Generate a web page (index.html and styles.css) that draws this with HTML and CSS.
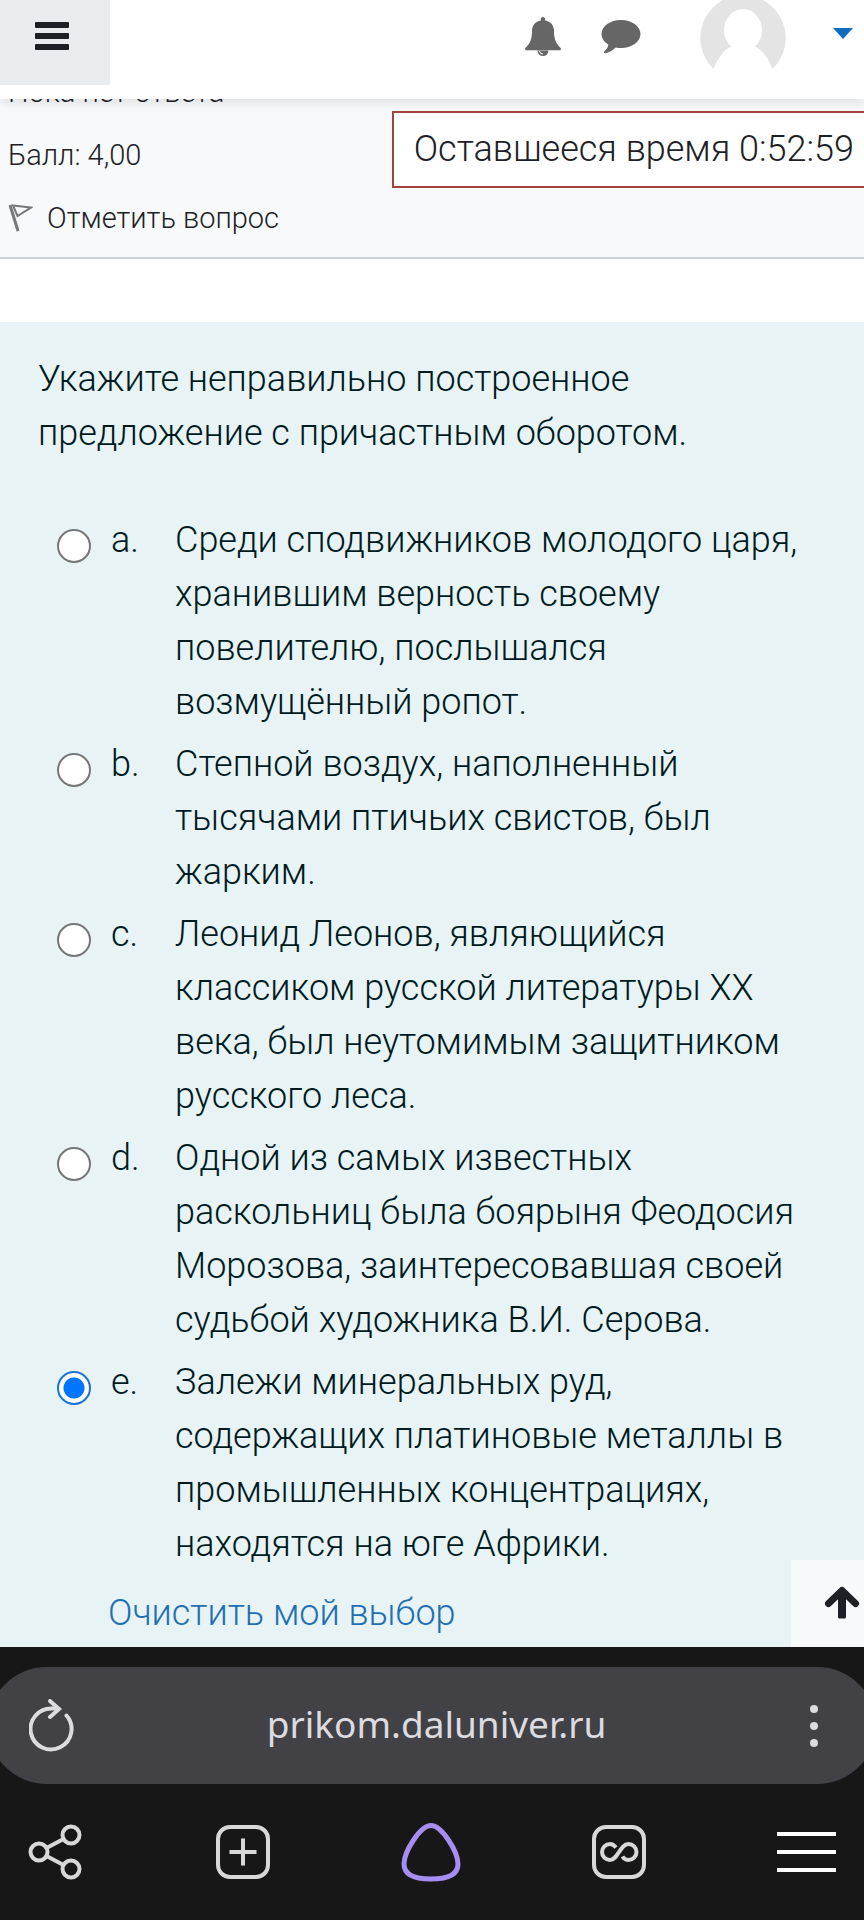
FILE: index.html
```html
<!DOCTYPE html>
<html lang="ru">
<head>
    <meta charset="UTF-8">
    <meta name="viewport" content="width=device-width, initial-scale=1.0">
    <title>Тест</title>
    <link rel="stylesheet" href="styles.css">
</head>
<body>
    <header class="navbar">
        <button type="button" class="menu-button" aria-label="Боковая панель">
            <svg width="34" height="28" viewBox="0 0 34 28" fill="#1d2125">
                <rect width="34" height="6" rx="1"/>
                <rect y="11" width="34" height="6" rx="1"/>
                <rect y="22" width="34" height="6" rx="1"/>
            </svg>
        </button>
        <div class="user-nav">
            <button type="button" class="icon-button" aria-label="Уведомления">
                <svg width="36" height="40" viewBox="0 0 36 40">
                    <path fill="#666" d="M18 0c1.300 0 2.200 1 2.200 2.200v1.200c5.600 1 8.800 5 8.800 10.400 0 8.200 1.800 12.700 6.600 17.200.6.700.4 2.200-.9 2.200H1.300c-1.300 0-1.500-1.500-.9-2.200C5.200 26.500 7 22 7 13.800 7 8.400 10.200 4.400 15.800 3.400V2.200C15.800 1 16.700 0 18 0z"/>
                    <path fill="#666" d="M12.500 33.500a5.500 5.500 0 0 0 11 0z"/>
                    <path fill="none" stroke="#fff" stroke-width="1" d="M14.500 34a3.500 3.500 0 0 0 3.500 3"/>
                </svg>
            </button>
            <button type="button" class="icon-button" aria-label="Сообщения">
                <svg width="40" height="34" viewBox="0 0 40 34">
                    <path fill="#666" d="M20 0c10.800 0 19.500 6.300 19.500 14S30.800 28 20 28c-1.800 0-3.600-.2-5.300-.6C11.800 30.200 8 32.700 4.200 33.200c-1.100.2-1.700-.9-1-1.600 2.300-2.200 3.900-4.300 4.200-7.100C3.200 22 .5 18.200.5 14 .5 6.300 9.200 0 20 0z"/>
                </svg>
            </button>
            <button type="button" class="avatar-button" aria-label="Меню пользователя">
                <svg width="86" height="86" viewBox="0 0 86 86">
                    <path fill="#e4e4e4" d="M43 0a43 43 0 0 1 29.500 74C68.500 63.500 62 54 54.500 51.500 59 48 62 42.500 62 35a19 21 0 0 0-38 0c0 7.500 3 13 7.500 16.500C24 54 17.500 63.500 13.500 74A43 43 0 0 1 43 0z"/>
                </svg>
                <svg width="20" height="11" viewBox="0 0 20 11"><path fill="#0f6cbf" d="M0 0h20L10 11z"/></svg>
            </button>
        </div>
    </header>

    <main>
        <section class="info">
            <p>Пока нет ответа</p>
            <p>Балл: 4,00</p>
            <button type="button" class="flag-button">
                <svg width="25" height="28" viewBox="0 0 25 28" fill="none" stroke="#777">
                    <path stroke-width="3" d="M2 1l8 26"/>
                    <path stroke-width="2" d="M5 1.500l18 2L9.500 12z"/>
                </svg>
                Отметить вопрос
            </button>
        </section>
        <div class="timer" role="timer">Оставшееся время 0:52:59</div>

        <form class="question">
            <p class="question-text" id="question">Укажите неправильно построенное предложение с причастным оборотом.</p>
            <div class="answers" role="radiogroup" aria-labelledby="question">
                <div class="answer">
                    <input type="radio" name="answer" id="answerA">
                    <label for="answerA"><span class="letter">a.</span><span>Среди сподвижников молодого царя, хранившим верность своему повелителю, послышался возмущённый ропот.</span></label>
                </div>
                <div class="answer">
                    <input type="radio" name="answer" id="answerB">
                    <label for="answerB"><span class="letter">b.</span><span>Степной воздух, наполненный тысячами птичьих свистов, был жарким.</span></label>
                </div>
                <div class="answer">
                    <input type="radio" name="answer" id="answerC">
                    <label for="answerC"><span class="letter">c.</span><span>Леонид Леонов, являющийся классиком русской литературы XX века, был неутомимым защитником русского леса.</span></label>
                </div>
                <div class="answer">
                    <input type="radio" name="answer" id="answerD">
                    <label for="answerD"><span class="letter">d.</span><span>Одной из самых известных раскольниц была боярыня Феодосия Морозова, заинтересовавшая своей судьбой художника В.И. Серова.</span></label>
                </div>
                <div class="answer">
                    <input type="radio" name="answer" id="answerE" checked>
                    <label for="answerE"><span class="letter">e.</span><span>Залежи минеральных руд, содержащих платиновые металлы в промышленных концентрациях, находятся на юге Африки.</span></label>
                </div>
            </div>
            <a href="#" class="clear-link">Очистить мой выбор</a>
            <button type="button" class="up-button" aria-label="Наверх">
                <svg width="36" height="34" viewBox="0 0 36 34" fill="none" stroke="#1d2125" stroke-linecap="round" stroke-linejoin="round">
                    <path stroke-width="8" stroke-linecap="butt" d="M18 6v25"/>
                    <path stroke-width="3" d="M15.500 31h5"/>
                    <path stroke-width="7" d="M4.500 17.500L18 4.500l13.500 13"/>
                </svg>
            </button>
        </form>
    </main>

    <footer class="browser-bar">
        <div class="address">
            <button type="button" aria-label="Обновить">
                <svg width="46" height="54" viewBox="0 0 46 54" fill="none" stroke="#dcdbe0" stroke-width="4">
                    <path stroke-linecap="round" d="M37.500 16.500A20.500 20.500 0 1 1 23 9.500h6"/>
                    <path stroke-linecap="round" d="M21 2l9 8-9 8"/>
                </svg>
            </button>
            <span class="url">prikom.daluniver.ru</span>
            <button type="button" aria-label="Ещё">
                <svg width="8" height="44" viewBox="0 0 8 44" fill="#dcdbe0">
                    <circle cx="4" cy="5" r="4"/>
                    <circle cx="4" cy="22" r="4"/>
                    <circle cx="4" cy="39" r="4"/>
                </svg>
            </button>
        </div>
        <nav class="tools">
            <button type="button" aria-label="Поделиться">
                <svg width="60" height="60" viewBox="0 0 60 60" fill="none" stroke="#d8d8d8" stroke-width="4">
                    <circle cx="14" cy="30" r="8.500"/>
                    <circle cx="46" cy="13" r="8.500"/>
                    <circle cx="46" cy="47" r="8.500"/>
                    <path d="M21.500 26l17-9M21.500 34l17 9"/>
                </svg>
            </button>
            <button type="button" aria-label="Новая вкладка">
                <svg width="60" height="60" viewBox="0 0 60 60" fill="none" stroke="#d8d8d8" stroke-width="4">
                    <rect x="5" y="5" width="50" height="50" rx="12"/>
                    <path d="M30 16.500v27M16.500 30h27"/>
                </svg>
            </button>
            <button type="button" aria-label="Алиса">
                <svg width="60" height="60" viewBox="0 0 60 60" fill="none" stroke="#a68df2" stroke-width="5">
                    <path d="M30 3.500C19 3.500 3 30 3 42 3 52 13 57 30 57s27-5 27-15C57 30 41 3.500 30 3.500z"/>
                </svg>
            </button>
            <button type="button" aria-label="Вкладки">
                <svg width="60" height="60" viewBox="0 0 60 60" fill="none" stroke="#d8d8d8" stroke-width="4">
                    <rect x="5" y="5" width="50" height="50" rx="12"/>
                    <path d="M27 25.500c-2-2.500-4-3.500-6-3.500a8 8 0 0 0 0 16c8 0 10-16 18.500-16a8 8 0 0 1 0 16c-2.500 0-4.500-1-6-3.500"/>
                </svg>
            </button>
            <button type="button" aria-label="Меню браузера">
                <svg width="60" height="60" viewBox="0 0 60 60" fill="none" stroke="#fff" stroke-width="4">
                    <path d="M0 12h59M0 30h59M0 48h59"/>
                </svg>
            </button>
        </nav>
    </footer>
</body>
</html>
```

FILE: styles.css
```css
* {
    box-sizing: border-box;
}

body {
    margin: 0;
    min-height: 100vh;
    display: flex;
    flex-direction: column;
    font-family: Roboto, sans-serif;
    font-size: 36px;
    font-weight: 300;
    line-height: 54px;
    color: #1d2125;
    background-color: #fff;
    overflow-x: hidden;
}

p {
    margin: 0;
}

button {
    padding: 0;
    border: none;
    background: none;
    font: inherit;
    color: inherit;
    cursor: pointer;
}

svg {
    display: block;
}

/* Верхняя панель */
.navbar {
    position: relative;
    z-index: 2;
    display: flex;
    justify-content: space-between;
    align-items: flex-start;
    padding-bottom: 14px;
    background-color: #fff;
    box-shadow: 0 4px 10px rgba(0, 0, 0, 0.1);
}

.menu-button {
    height: 85px;
    padding: 0 41px 14px 35px;
    background-color: #e9ecef;
}

.user-nav {
    display: flex;
    align-items: center;
    gap: 40px;
    height: 76px;
    padding-right: 11px;
}

.avatar-button {
    display: flex;
    align-items: center;
    gap: 47px;
    margin-left: 19px;
}

.avatar-button svg:last-child {
    margin-bottom: 10px;
}

.user-nav .icon-button {
    padding-bottom: 2px;
}

/* Сведения о вопросе, первая строка уходит под панель */
main {
    position: relative;
    flex: 1;
    display: flex;
    flex-direction: column;
}

.info {
    display: flex;
    flex-direction: column;
    align-items: flex-start;
    gap: 21px;
    margin-top: -28px;
    padding: 0 8px 18px;
    font-size: 29px;
    line-height: 42px;
    background-color: #f8f9fa;
    border-bottom: 2px solid #cad0d7;
}

.flag-button {
    display: flex;
    align-items: center;
    gap: 14px;
}

.timer {
    position: absolute;
    top: 12px;
    right: 0;
    padding: 9px 10px 10px 20px;
    background-color: #fff;
    border: 2px solid #a4423e;
    border-right: none;
}

/* Вопрос */
.question {
    position: relative;
    flex: 1;
    margin-top: 63px;
    padding: 30px 38px 5px;
    color: #001a1e;
    background-color: #e7f3f5;
}

.question-text {
    margin-bottom: 53px;
}

.answers {
    display: flex;
    flex-direction: column;
    gap: 8px;
    margin-bottom: 15px;
}

.answer {
    display: flex;
    align-items: flex-start;
    gap: 20px;
    padding-left: 19px;
}

.answer label {
    display: flex;
    flex: 1;
}

.letter {
    flex: 0 0 64px;
}

.answer input {
    appearance: none;
    flex: none;
    width: 34px;
    height: 34px;
    margin: 16px 0 0;
    border: 2px solid #767676;
    border-radius: 50%;
    background-color: #fff;
}

.answer input:checked {
    border-color: #1a73d9;
    background: radial-gradient(circle, #0075ff 10px, #fff 11px);
}

.clear-link {
    display: block;
    width: fit-content;
    margin-left: 70px;
    color: #1f6fb2;
    text-decoration: none;
}

.up-button {
    position: absolute;
    right: 0;
    bottom: 0;
    padding: 26px 4px 27px 33px;
    background-color: #f8f9fa;
}

/* Панель браузера */
.browser-bar {
    position: relative;
    padding: 20px 0 38px;
    background-color: #171717;
}

.address {
    display: flex;
    align-items: center;
    justify-content: space-between;
    height: 117px;
    margin: 0 -12px 38px;
    padding: 0 58px 0 41px;
    border-radius: 59px;
    background-color: #424146;
}

.url {
    flex: 1;
    padding: 0 12px 4px 0;
    font-family: "Noto Sans", sans-serif;
    font-size: 37px;
    font-weight: 400;
    text-align: center;
    color: #dcdbe0;
}

.tools {
    display: flex;
    justify-content: space-between;
    padding: 0 27px 0 25px;
}
```
